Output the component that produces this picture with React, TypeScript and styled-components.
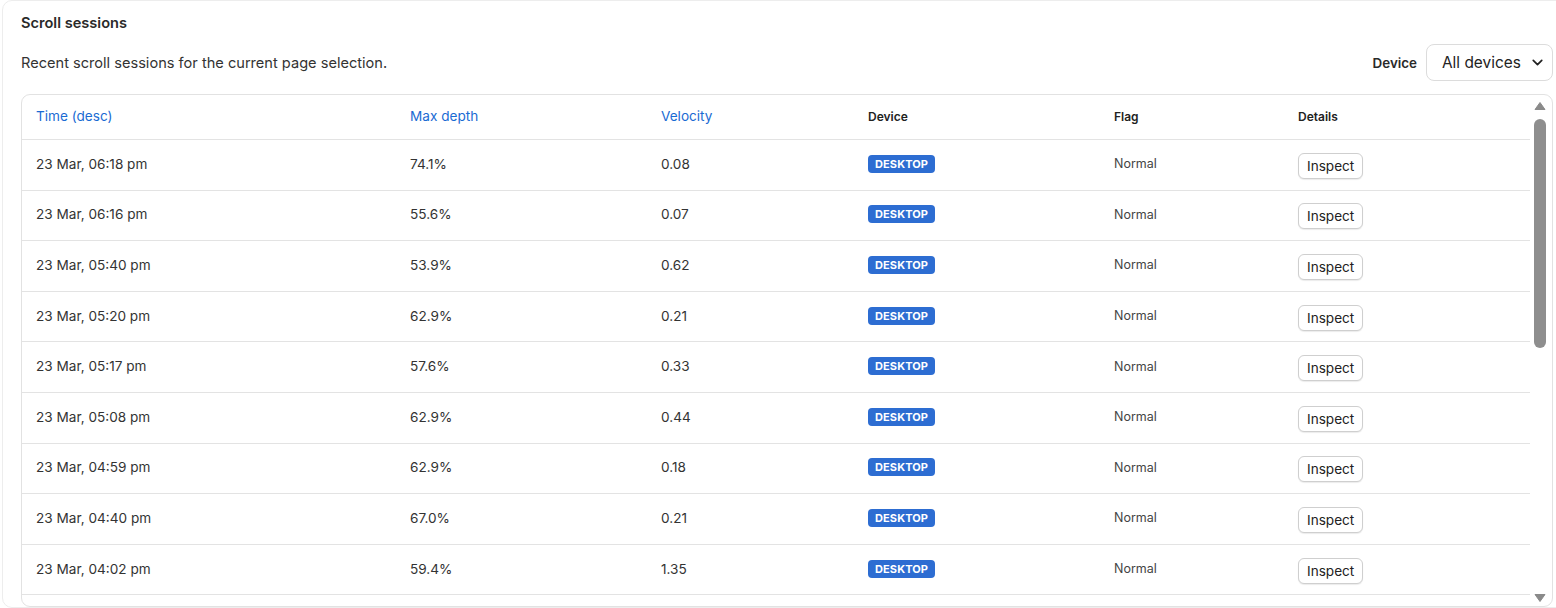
import React from 'react';
import styled, { createGlobalStyle } from 'styled-components';
import { ChevronDown } from 'lucide-react';

const GlobalStyle = createGlobalStyle`
  html, body {
    margin: 0;
    padding: 0;
    background: #fff;
    overflow: hidden;
  }
  body {
    font-family: Inter, "Noto Sans", "Liberation Sans", sans-serif;
    color: #2b2b2b;
  }
  * { box-sizing: border-box; }
`

const Card = styled.section`
  margin: 0 -20px 0 2px;
  border: 1px solid #ededed;
  border-radius: 10px;
  padding: 13px 22px 0 18px;
  background: #fff;
`

const Title = styled.h2`
  margin: 0;
  font-size: 14.6px;
  line-height: 18px;
  font-weight: 600;
  color: #2a2a2a;
`

const Toolbar = styled.div`
  display: flex;
  align-items: center;
  justify-content: space-between;
  margin-top: 12px;
`

const Subtitle = styled.p`
  margin: 0;
  font-size: 14.6px;
  color: #333;
`

const Filter = styled.label`
  display: flex;
  align-items: center;
  gap: 9px;
  font-size: 13.4px;
  font-weight: 600;
  color: #2a2a2a;
`

const SelectBox = styled.div`
  display: flex;
  align-items: center;
  justify-content: space-between;
  width: 127px;
  height: 37px;
  padding: 0 6px 0 15px;
  border: 1px solid #dcdcdc;
  border-radius: 8px;
  font-size: 15.4px;
  font-weight: 400;
  color: #222;
  background: #fff;
`

const TableFrame = styled.div`
  display: flex;
  margin-top: 13px;
  height: 513px;
  border: 1px solid #e2e2e2;
  border-radius: 9px;
  overflow: hidden;
`

const ScrollArea = styled.div`
  flex: 1;
  overflow: hidden;
`

const ScrollRail = styled.div`
  width: 22px;
  flex-shrink: 0;
  display: flex;
  flex-direction: column;
  padding: 6px 0 3px 4px;
`

const Thumb = styled.div`
  width: 12px;
  height: 229px;
  margin-top: 8px;
  border-radius: 6px;
  background: #8e8e8e;
`

const RailSpacer = styled.div`
  flex: 1;
`

const Table = styled.table`
  width: 100%;
  border-collapse: collapse;
  table-layout: fixed;
`

const Th = styled.th<{ $sortable?: boolean; $w?: number }>`
  width: ${p => (p.$w ? `${p.$w}px` : 'auto')};
  text-align: left;
  padding: 12px 14px 14px;
  border-bottom: 1px solid #e3e3e3;
  font-size: ${p => (p.$sortable ? '13.6px' : '12px')};
  font-weight: ${p => (p.$sortable ? 400 : 600)};
  color: ${p => (p.$sortable ? '#1a6bd3' : '#222')};
  height: 44.5px;
`

const Td = styled.td<{ $small?: boolean }>`
  padding: 0 14px 2px;
  height: 50.6px;
  border-bottom: 1px solid #e3e3e3;
  font-size: ${p => (p.$small ? '12.5px' : '13.6px')};
  color: ${p => (p.$small ? '#444' : '#333')};
  vertical-align: middle;
`

const Badge = styled.span`
  display: inline-block;
  padding: 3px 7px;
  border-radius: 4px;
  background: #2d6dd2;
  color: #fff;
  font-size: 11px;
  font-weight: 700;
  letter-spacing: 0.1px;
  line-height: 12px;
`

const InspectButton = styled.button`
  font-family: inherit;
  font-size: 13.6px;
  color: #222;
  background: #fff;
  border: 1px solid #cfcfcf;
  border-radius: 6px;
  padding: 4px 8px;
  margin-top: 4px;
  box-shadow: 0 1px 1px rgba(0, 0, 0, 0.08);
  cursor: pointer;
`

const sessions = [
  ['23 Mar, 06:18 pm', '74.1%', '0.08'],
  ['23 Mar, 06:16 pm', '55.6%', '0.07'],
  ['23 Mar, 05:40 pm', '53.9%', '0.62'],
  ['23 Mar, 05:20 pm', '62.9%', '0.21'],
  ['23 Mar, 05:17 pm', '57.6%', '0.33'],
  ['23 Mar, 05:08 pm', '62.9%', '0.44'],
  ['23 Mar, 04:59 pm', '62.9%', '0.18'],
  ['23 Mar, 04:40 pm', '67.0%', '0.21'],
  ['23 Mar, 04:02 pm', '59.4%', '1.35'],
  ['23 Mar, 03:47 pm', '48.2%', '0.29'],
  ['23 Mar, 03:31 pm', '71.5%', '0.12'],
  ['23 Mar, 03:05 pm', '62.9%', '0.40'],
];

const Arrow = ({ down }: { down?: boolean }) => (
  <svg width="12" height="10" viewBox="0 0 12 10" style={{ flexShrink: 0 }}>
    <path
      d={down ? 'M1 1.5 L11 1.5 L6 8.5 Z' : 'M1 8.5 L11 8.5 L6 1.5 Z'}
      fill="#8a8a8a"
      stroke="#8a8a8a"
      strokeWidth="1"
      strokeLinejoin="round"
    />
  </svg>
);

export default function App() {
  return (
    <>
      <GlobalStyle />
      <Card>
        <Title>Scroll sessions</Title>
        <Toolbar>
          <Subtitle>Recent scroll sessions for the current page selection.</Subtitle>
          <Filter>
            Device
            <SelectBox>
              <span>All devices</span>
              <ChevronDown size={17} strokeWidth={2.4} />
            </SelectBox>
          </Filter>
        </Toolbar>
        <TableFrame>
          <ScrollArea>
            <Table>
              <thead>
                <tr>
                  <Th $sortable $w={374}>Time (desc)</Th>
                  <Th $sortable $w={251}>Max depth</Th>
                  <Th $sortable $w={207}>Velocity</Th>
                  <Th $w={246}>Device</Th>
                  <Th $w={184}>Flag</Th>
                  <Th>Details</Th>
                </tr>
              </thead>
              <tbody>
                {sessions.map(([time, depth, velocity]) => (
                  <tr key={time}>
                    <Td>{time}</Td>
                    <Td>{depth}</Td>
                    <Td>{velocity}</Td>
                    <Td><Badge>DESKTOP</Badge></Td>
                    <Td $small>Normal</Td>
                    <Td><InspectButton>Inspect</InspectButton></Td>
                  </tr>
                ))}
              </tbody>
            </Table>
          </ScrollArea>
          <ScrollRail>
            <Arrow />
            <Thumb />
            <RailSpacer />
            <Arrow down />
          </ScrollRail>
        </TableFrame>
      </Card>
    </>
  );
}
